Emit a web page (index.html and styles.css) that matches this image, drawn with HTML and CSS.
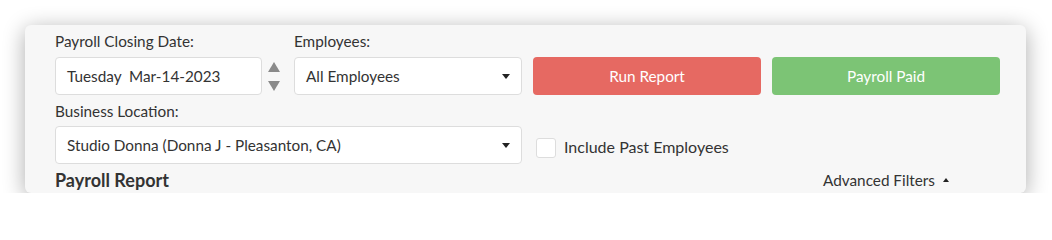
FILE: index.html
```html
<!DOCTYPE html>
<html>
<head>
<meta charset="utf-8">
<link rel="stylesheet" href="styles.css">
</head>
<body>
<div class="card">
  <div class="grid">
    <div class="field">
      <div class="label">Payroll Closing Date:</div>
      <div class="date-wrap">
        <div class="input date">Tuesday&nbsp; Mar-14-2023</div>
        <div class="spinner">
          <svg width="12" height="10" viewBox="0 0 12 10"><polygon points="6,0 12,10 0,10" fill="#8a8a8a"/></svg>
          <svg width="12" height="10" viewBox="0 0 12 10"><polygon points="0,0 12,0 6,10" fill="#8a8a8a"/></svg>
        </div>
      </div>
    </div>
    <div class="field">
      <div class="label">Employees:</div>
      <div class="input select"><span>All Employees</span><span class="caret"></span></div>
    </div>
    <div class="field btn-field">
      <button class="btn run">Run Report</button>
    </div>
    <div class="field btn-field">
      <button class="btn paid">Payroll Paid</button>
    </div>

    <div class="field span2">
      <div class="label">Business Location:</div>
      <div class="input select"><span>Studio Donna (Donna J - Pleasanton, CA)</span><span class="caret"></span></div>
    </div>
    <div class="check-field span2">
      <span class="checkbox"></span>
      <span class="check-label">Include Past Employees</span>
    </div>

    <div class="title span3">Payroll Report</div>
    <div class="adv">Advanced Filters <span class="caret-up"></span></div>
  </div>
</div>
</body>
</html>
```
FILE: styles.css
```css
html, body {
  margin: 0;
  padding: 0;
  background: #ffffff;
}
body {
  font-family: "Lato", "Liberation Sans", sans-serif;
  color: #333333;
  padding: 25px 0 0 25px;
}
.card {
  width: 1001px;
  height: 168px;
  background: #f7f7f7;
  border-radius: 6px;
  box-shadow: 0 4px 22px rgba(0, 0, 0, 0.33);
  overflow: hidden;
  box-sizing: border-box;
  padding: 5px 25px 0 30px;
}
.grid {
  display: grid;
  grid-template-columns: 228px 228px 228px 228px;
  column-gap: 11px;
}
.field {
  display: flex;
  flex-direction: column;
}
.btn-field {
  justify-content: flex-end;
}
.span2 { grid-column: span 2; }
.span3 { grid-column: span 3; }
.label {
  font-size: 15.3px;
  line-height: 20px;
  height: 20px;
  margin-bottom: 6px;
  margin-top: 1px;
}
.span2 .label {
  margin-top: 6px;
  margin-bottom: 5px;
}
.date-wrap {
  display: flex;
  align-items: center;
}
.input {
  box-sizing: border-box;
  height: 38px;
  background: #ffffff;
  border: 1px solid #dddddd;
  border-radius: 4px;
  font-size: 15.3px;
  padding: 0 11px;
  display: flex;
  align-items: center;
  color: #333333;
}
.date {
  width: 209px;
}
.spinner {
  width: 19px;
  display: flex;
  flex-direction: column;
  align-items: center;
  gap: 9px;
  margin-left: 2px;
}
.spinner svg { display: block; }
.select {
  justify-content: space-between;
}
.caret {
  width: 0;
  height: 0;
  border-left: 4.5px solid transparent;
  border-right: 4.5px solid transparent;
  border-top: 5px solid #222222;
}
.btn {
  height: 38px;
  border: none;
  border-radius: 4px;
  color: #ffffff;
  font-family: "Lato", "Liberation Sans", sans-serif;
  font-size: 15.3px;
  cursor: pointer;
}
.run { background: #e66962; }
.paid { background: #7cc475; }
.check-field {
  display: flex;
  align-items: flex-end;
  padding-left: 3px;
  padding-bottom: 6px;
}
.checkbox {
  box-sizing: border-box;
  width: 20px;
  height: 20px;
  background: #ffffff;
  border: 1px solid #dddddd;
  border-radius: 3px;
  margin-right: 8px;
}
.check-label {
  font-size: 16px;
  line-height: 20px;
  position: relative;
  top: -1px;
}
.title {
  font-size: 18px;
  font-weight: 700;
  line-height: 22px;
  margin-top: 5px;
}
.adv {
  font-size: 15.3px;
  line-height: 22px;
  margin-top: 5px;
  display: flex;
  justify-content: center;
  align-items: center;
  gap: 8px;
}
.caret-up {
  width: 0;
  height: 0;
  border-left: 3.5px solid transparent;
  border-right: 3.5px solid transparent;
  border-bottom: 4px solid #222222;
}
```
